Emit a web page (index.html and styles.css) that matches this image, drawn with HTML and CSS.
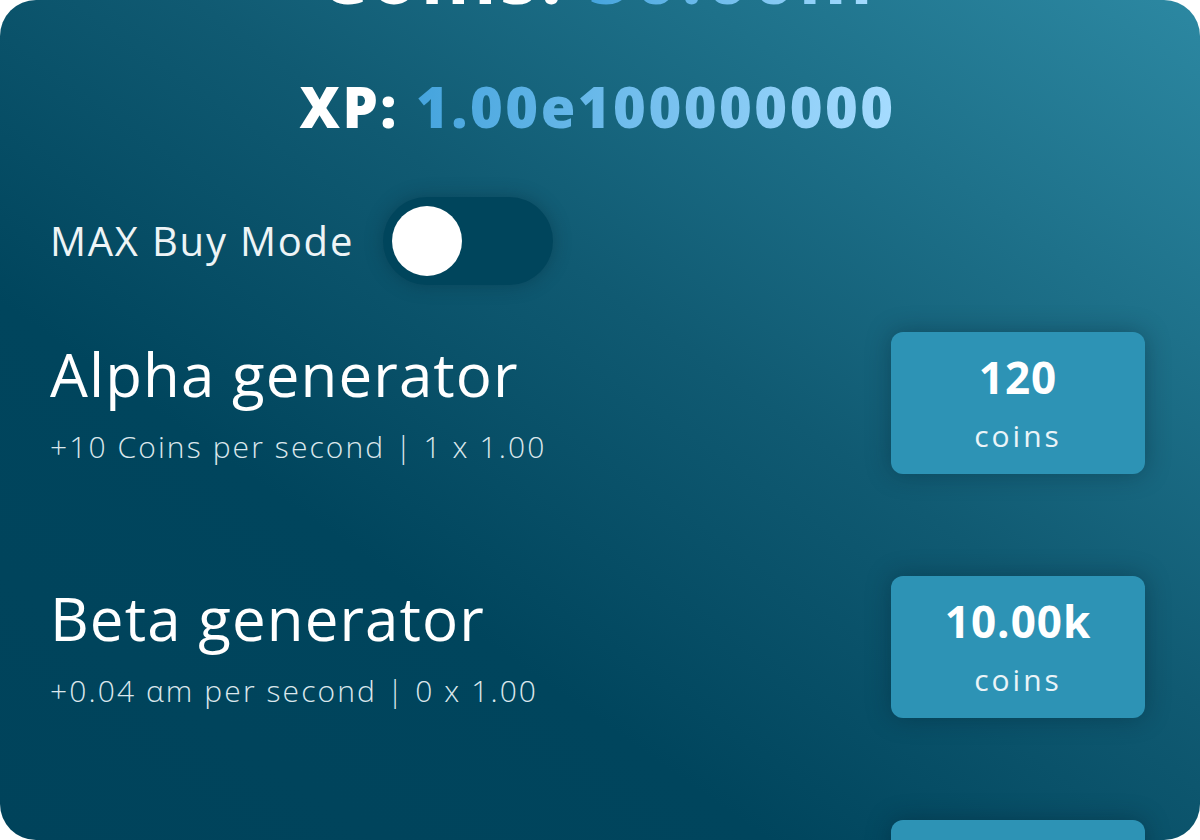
FILE: index.html
```html
<!DOCTYPE html>
<html lang="en">
<head>
<meta charset="utf-8">
<title>Generators</title>
<link rel="stylesheet" href="styles.css">
</head>
<body>
<main class="card">
  <h1 class="coins">Coins: <span class="grad">50.00m</span></h1>
  <div class="xp">XP: <span class="grad">1.00e100000000</span></div>
  <div class="maxrow">
    <span class="maxlabel">MAX Buy Mode</span>
    <div class="toggle"><div class="knob"></div></div>
  </div>
  <div class="gens">
    <div class="gen">
      <div class="info">
        <div class="gname">Alpha generator</div>
        <div class="gsub">+10 Coins per second | 1 x 1.00</div>
      </div>
      <button class="buy"><span class="price">120</span><span class="unit">coins</span></button>
    </div>
    <div class="gen">
      <div class="info">
        <div class="gname">Beta generator</div>
        <div class="gsub">+0.04 αm per second | 0 x 1.00</div>
      </div>
      <button class="buy"><span class="price">10.00k</span><span class="unit">coins</span></button>
    </div>
    <div class="gen">
      <div class="info">
        <div class="gname">Gamma generator</div>
        <div class="gsub">+0.00 βm per second | 0 x 1.00</div>
      </div>
      <button class="buy"><span class="price">1.00m</span><span class="unit">coins</span></button>
    </div>
  </div>
</main>
</body>
</html>
```
FILE: styles.css
```css
html, body {
  margin: 0;
  padding: 0;
  background: #ffffff;
  overflow: hidden;
}
body {
  font-family: "Open Sans", "DejaVu Sans", sans-serif;
  color: #ffffff;
}
.card {
  display: flex;
  flex-direction: column;
  box-sizing: border-box;
  height: 840px;
  padding: 0 55px 0 50px;
  border-radius: 36px;
  background: linear-gradient(to bottom left, #2c88a2 0%, #105a72 42%, #00455d 68%, #00435b 100%);
}
.grad {
  background: linear-gradient(90deg, #45a4dd 0%, #a6dcff 100%);
  -webkit-background-clip: text;
  background-clip: text;
  color: transparent;
}
.coins {
  margin: -63px 0 0 0;
  font-size: 76px;
  line-height: 76px;
  font-weight: 700;
  letter-spacing: 3px;
  text-align: center;
}
.xp {
  margin-top: 65px;
  font-size: 56px;
  line-height: 56px;
  font-weight: 800;
  letter-spacing: 2.5px;
  text-align: center;
}
.maxrow {
  margin-top: 63px;
  display: flex;
  align-items: center;
  gap: 29px;
  height: 88px;
}
.maxlabel {
  font-size: 40px;
  line-height: 40px;
  font-weight: 400;
  letter-spacing: 1.8px;
  color: #eef4f6;
}
.toggle {
  box-sizing: border-box;
  width: 170px;
  height: 88px;
  padding: 0 9px;
  border-radius: 44px;
  background: #00455c;
  display: flex;
  align-items: center;
  box-shadow: 0 0 18px rgba(0, 35, 50, 0.35);
}
.knob {
  width: 70px;
  height: 70px;
  border-radius: 50%;
  background: #ffffff;
}
.gens {
  margin-top: 47px;
  display: flex;
  flex-direction: column;
  gap: 102px;
}
.gen {
  display: flex;
  align-items: center;
  justify-content: space-between;
  height: 142px;
}
.info {
  display: flex;
  flex-direction: column;
  gap: 28px;
}
.gname {
  font-size: 60px;
  line-height: 60px;
  font-weight: 500;
  letter-spacing: 1.1px;
}
.gsub {
  font-size: 30px;
  line-height: 30px;
  font-weight: 300;
  letter-spacing: 2.1px;
  color: #dbe7ec;
}
.buy {
  box-sizing: border-box;
  width: 254px;
  height: 142px;
  border: none;
  border-radius: 12px;
  background: #2d93b5;
  color: #ffffff;
  font-family: inherit;
  display: flex;
  flex-direction: column;
  align-items: center;
  justify-content: center;
  gap: 22px;
  padding: 0;
  box-shadow: 0 0 24px rgba(0, 25, 40, 0.35);
}
.price {
  font-size: 44px;
  line-height: 44px;
  font-weight: 700;
  letter-spacing: 1px;
}
.unit {
  font-size: 30px;
  line-height: 30px;
  font-weight: 400;
  letter-spacing: 3px;
  color: #eaf4f8;
}
```
